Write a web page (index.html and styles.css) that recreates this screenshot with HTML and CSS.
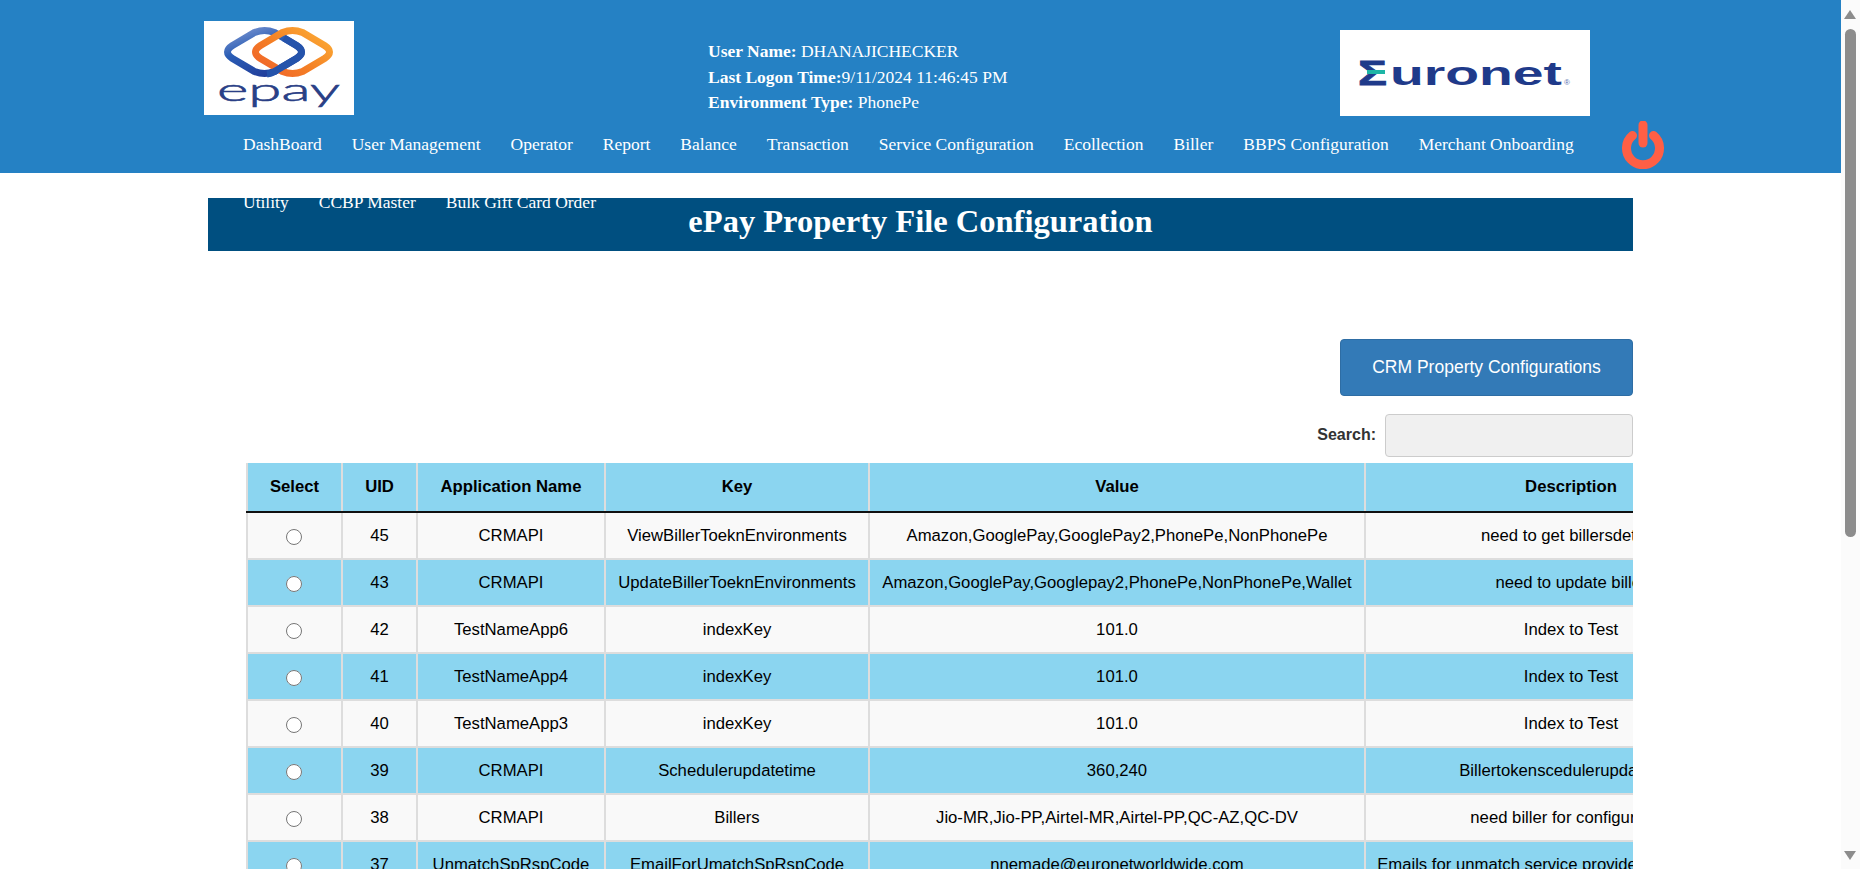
FILE: index.html
```html
<!DOCTYPE html>
<html lang="en">

<head>
    <meta charset="UTF-8">
    <title>ePay Property File Configuration</title>
    <link rel="stylesheet" href="styles.css">
</head>

<body>
    <div class="page">
        <header class="top">
            <div class="top_row">
                <svg class="logo_epay" viewBox="0 0 150 94" role="img" aria-label="epay">
                    <defs>
                        <linearGradient id="grad_blue" x1="0" y1="0" x2="0.6" y2="1">
                            <stop offset="0" stop-color="#7f98d2" />
                            <stop offset="0.45" stop-color="#2a5db5" />
                            <stop offset="1" stop-color="#223f9c" />
                        </linearGradient>
                        <linearGradient id="grad_orange" x1="0" y1="1" x2="1" y2="0.2">
                            <stop offset="0" stop-color="#ef5f2b" />
                            <stop offset="0.5" stop-color="#f47f25" />
                            <stop offset="1" stop-color="#fba733" />
                        </linearGradient>
                    </defs>
                    <path class="ring_blue" d="M28.500 24.500 L50.500 11.500 Q60.500 7.500 70.500 11.500 L92.500 24.500 Q102.500 31 92.500 37.500 L70.500 50.500 Q60.500 54.500 50.500 50.500 L28.500 37.500 Q18.500 31 28.500 24.500 Z" />
                    <path class="ring_orange" d="M56.500 24.500 L78.500 11.500 Q88.500 7.500 98.500 11.500 L120.500 24.500 Q130.500 31 120.500 37.500 L98.500 50.500 Q88.500 54.500 78.500 50.500 L56.500 37.500 Q46.500 31 56.500 24.500 Z" />
                    <path class="ring_over" d="M80 17 L92.500 24.500 Q102.500 31 92.500 37.500 L70.500 50.500 Q67 52.500 63 53" />
                    <text class="epay_text" x="13" y="80" textLength="123" lengthAdjust="spacingAndGlyphs">epay</text>
                </svg>
                <div class="user_info">
                    <p><b>User Name:</b> DHANAJICHECKER</p>
                    <p><b>Last Logon Time:</b>9/11/2024 11:46:45 PM</p>
                    <p><b>Environment Type:</b> PhonePe</p>
                </div>
                <svg class="logo_euronet" viewBox="0 0 250 86" role="img" aria-label="Euronet">
                    <text class="euronet_sigma" x="18" y="55" textLength="29" lengthAdjust="spacingAndGlyphs">Σ</text>
                    <text class="euronet_text" x="50" y="55" textLength="172" lengthAdjust="spacingAndGlyphs">uronet</text>
                    <rect class="euronet_bar" x="27" y="40" width="18" height="4" />
                    <text class="euronet_reg" x="224" y="55">®</text>
                </svg>
            </div>
            <div class="nav_row">
                <nav class="menu">
                    <a href="#">DashBoard</a>
                    <a href="#">User Management</a>
                    <a href="#">Operator</a>
                    <a href="#">Report</a>
                    <a href="#">Balance</a>
                    <a href="#">Transaction</a>
                    <a href="#">Service Configuration</a>
                    <a href="#">Ecollection</a>
                    <a href="#">Biller</a>
                    <a href="#">BBPS Configuration</a>
                    <a href="#">Merchant Onboarding</a>
                    <a href="#">Utility</a>
                    <a href="#">CCBP Master</a>
                    <a href="#">Bulk Gift Card Order</a>
                </nav>
                <svg class="power" viewBox="0 0 44 48" aria-label="Log out">
                    <path d="M11.500 14.500a16.500 16.500 0 1 0 21 0" />
                    <line x1="22" y1="4" x2="22" y2="22" />
                </svg>
            </div>
        </header>

        <main class="content">
            <h1 class="title">ePay Property File Configuration</h1>
            <div class="actions">
                <button class="btn_crm">CRM Property Configurations</button>
            </div>
            <div class="search">
                <label for="search">Search:</label>
                <input id="search" type="text">
            </div>
            <div class="table_wrap">
                <table class="grid">
                    <colgroup>
                        <col class="c_select">
                        <col class="c_uid">
                        <col class="c_app">
                        <col class="c_key">
                        <col class="c_value">
                        <col class="c_desc">
                    </colgroup>
                    <thead>
                        <tr>
                            <th>Select</th>
                            <th>UID</th>
                            <th>Application Name</th>
                            <th>Key</th>
                            <th>Value</th>
                            <th>Description</th>
                        </tr>
                    </thead>
                    <tbody>
                        <tr>
                            <td><input type="radio" name="sel"></td>
                            <td>45</td>
                            <td>CRMAPI</td>
                            <td>ViewBillerToeknEnvironments</td>
                            <td>Amazon,GooglePay,GooglePay2,PhonePe,NonPhonePe</td>
                            <td>need to get billersdetails</td>
                        </tr>
                        <tr>
                            <td><input type="radio" name="sel"></td>
                            <td>43</td>
                            <td>CRMAPI</td>
                            <td>UpdateBillerToeknEnvironments</td>
                            <td>Amazon,GooglePay,Googlepay2,PhonePe,NonPhonePe,Wallet</td>
                            <td>need to update biller</td>
                        </tr>
                        <tr>
                            <td><input type="radio" name="sel"></td>
                            <td>42</td>
                            <td>TestNameApp6</td>
                            <td>indexKey</td>
                            <td>101.0</td>
                            <td>Index to Test</td>
                        </tr>
                        <tr>
                            <td><input type="radio" name="sel"></td>
                            <td>41</td>
                            <td>TestNameApp4</td>
                            <td>indexKey</td>
                            <td>101.0</td>
                            <td>Index to Test</td>
                        </tr>
                        <tr>
                            <td><input type="radio" name="sel"></td>
                            <td>40</td>
                            <td>TestNameApp3</td>
                            <td>indexKey</td>
                            <td>101.0</td>
                            <td>Index to Test</td>
                        </tr>
                        <tr>
                            <td><input type="radio" name="sel"></td>
                            <td>39</td>
                            <td>CRMAPI</td>
                            <td>Schedulerupdatetime</td>
                            <td>360,240</td>
                            <td>Billertokenscedulerupdatetime</td>
                        </tr>
                        <tr>
                            <td><input type="radio" name="sel"></td>
                            <td>38</td>
                            <td>CRMAPI</td>
                            <td>Billers</td>
                            <td>Jio-MR,Jio-PP,Airtel-MR,Airtel-PP,QC-AZ,QC-DV</td>
                            <td>need biller for configuration</td>
                        </tr>
                        <tr>
                            <td><input type="radio" name="sel"></td>
                            <td>37</td>
                            <td>UnmatchSpRspCode</td>
                            <td>EmailForUmatchSpRspCode</td>
                            <td>nnemade@euronetworldwide.com</td>
                            <td>Emails for unmatch service provider response codes</td>
                        </tr>
                    </tbody>
                </table>
            </div>
        </main>
    </div>

    <div class="scrollbar">
        <span class="arrow_up"></span>
        <span class="thumb"></span>
        <span class="arrow_down"></span>
    </div>
</body>

</html>
```

FILE: styles.css
```css
html,
body {
    margin: 0;
    height: 100%;
    overflow: hidden;
}

body {
    display: flex;
    background: #fff;
    font-family: "Liberation Sans", Arial, sans-serif;
    font-size: 16.7px;
    color: #000;
}

.page {
    width: 1841px;
    height: 869px;
    overflow: hidden;
    flex: none;
}

/* header */
.top {
    height: 173px;
    background: #2581c4;
    color: #fff;
    font-family: "Liberation Serif", "Times New Roman", serif;
    font-size: 17.5px;
}

.top_row {
    display: flex;
    align-items: flex-start;
    height: 115px;
    padding-left: 204px;
}

.logo_epay {
    width: 150px;
    height: 94px;
    margin-top: 21px;
    background: #fff;
    flex: none;
}

.ring_blue,
.ring_orange,
.ring_over {
    fill: none;
    stroke-width: 7;
    stroke-linecap: round;
}

.ring_blue {
    stroke: url(#grad_blue);
}

.ring_orange {
    stroke: url(#grad_orange);
}

.ring_over {
    stroke: #2553ab;
    stroke-linecap: butt;
}

.epay_text {
    font-family: Lato, "Liberation Sans", sans-serif;
    font-size: 31px;
    font-weight: 300;
    fill: #2a3f86;
    stroke: #2a3f86;
    stroke-width: 0.6;
}

.user_info {
    margin-left: 354px;
    margin-top: 39px;
    width: 632px;
    flex: none;
}

.user_info p {
    margin: 0;
    line-height: 25.5px;
}

.logo_euronet {
    width: 250px;
    height: 86px;
    margin-top: 30px;
    background: #fff;
    flex: none;
}

.euronet_sigma,
.euronet_text {
    font-family: "Liberation Sans", Arial, sans-serif;
    font-weight: bold;
    fill: #1f3a8a;
}

.euronet_sigma {
    font-size: 35px;
    stroke: #1f3a8a;
    stroke-width: 0.8;
}

.euronet_text {
    font-size: 34px;
}

.euronet_bar {
    fill: #1db5a6;
}

.euronet_reg {
    font-family: "Liberation Sans", Arial, sans-serif;
    font-size: 8px;
    fill: #5a6fb0;
}

.nav_row {
    display: flex;
    align-items: flex-start;
    padding-left: 243px;
}

.menu {
    display: flex;
    flex-wrap: wrap;
    column-gap: 30px;
    width: 1370px;
    flex: none;
}

.menu a {
    color: #fff;
    text-decoration: none;
    line-height: 58px;
}

.power {
    width: 44px;
    height: 48px;
    margin-left: 8px;
    margin-top: 6px;
    flex: none;
}

.power path,
.power line {
    fill: none;
    stroke: #ff5f45;
    stroke-width: 9;
    stroke-linecap: round;
}

/* content */
.content {
    padding-left: 208px;
    width: 1425px;
}

.title {
    margin: 25px 0 0;
    height: 53px;
    background: #004f80;
    color: #fff;
    font-family: "Liberation Serif", "Times New Roman", serif;
    font-size: 32.500px;
    font-weight: bold;
    line-height: 46px;
    text-align: center;
}

.actions {
    display: flex;
    justify-content: flex-end;
    margin-top: 88px;
}

.btn_crm {
    width: 293px;
    height: 57px;
    background: #337ab7;
    border: 1px solid #2e6da4;
    border-radius: 4px;
    color: #fff;
    font-family: "Liberation Sans", Arial, sans-serif;
    font-size: 17.500px;
}

.search {
    display: flex;
    justify-content: flex-end;
    align-items: center;
    gap: 9px;
    margin-top: 18px;
    font-size: 16px;
    font-weight: bold;
    color: #333;
}

.search label {
    margin-bottom: 1px;
}

.search input {
    width: 248px;
    height: 43px;
    box-sizing: border-box;
    background: #f0f0f0;
    border: 1px solid #ccc;
    border-radius: 4px;
}

.table_wrap {
    margin-top: 6px;
    margin-left: 38px;
    width: 1387px;
    overflow: hidden;
}

.grid {
    table-layout: fixed;
    width: 1529px;
    border-collapse: collapse;
    text-align: center;
}

.c_select { width: 95px; }
.c_uid { width: 75px; }
.c_app { width: 188px; }
.c_key { width: 264px; }
.c_value { width: 496px; }
.c_desc { width: 411px; }

.grid th {
    height: 48px;
    padding: 0;
    background: #8bd5f0;
    border-left: 2px solid #ddd;
    border-bottom: 2px solid #111;
    font-weight: bold;
}

.grid td {
    height: 45px;
    padding: 0;
    background: #f9f9f9;
    border-left: 2px solid #ddd;
    border-bottom: 2px solid #ddd;
    white-space: nowrap;
    overflow: hidden;
}

.grid tbody tr:nth-child(even) td {
    background: #8bd5f0;
}

.grid input {
    width: 16px;
    height: 16px;
    margin: 1px 2px 0 0;
    vertical-align: middle;
}

/* page scrollbar */
.scrollbar {
    flex: 1;
    position: relative;
    background: #fbfbfb;
}

.thumb {
    position: absolute;
    left: 4px;
    top: 29px;
    width: 11px;
    height: 508px;
    background: #8c8c8c;
    border-radius: 6px;
}

.arrow_up,
.arrow_down {
    position: absolute;
    left: 3px;
    width: 0;
    height: 0;
    border-left: 6.500px solid transparent;
    border-right: 6.500px solid transparent;
}

.arrow_up {
    top: 10px;
    border-bottom: 9px solid #8c8c8c;
}

.arrow_down {
    bottom: 9px;
    border-top: 9px solid #8c8c8c;
}
```
